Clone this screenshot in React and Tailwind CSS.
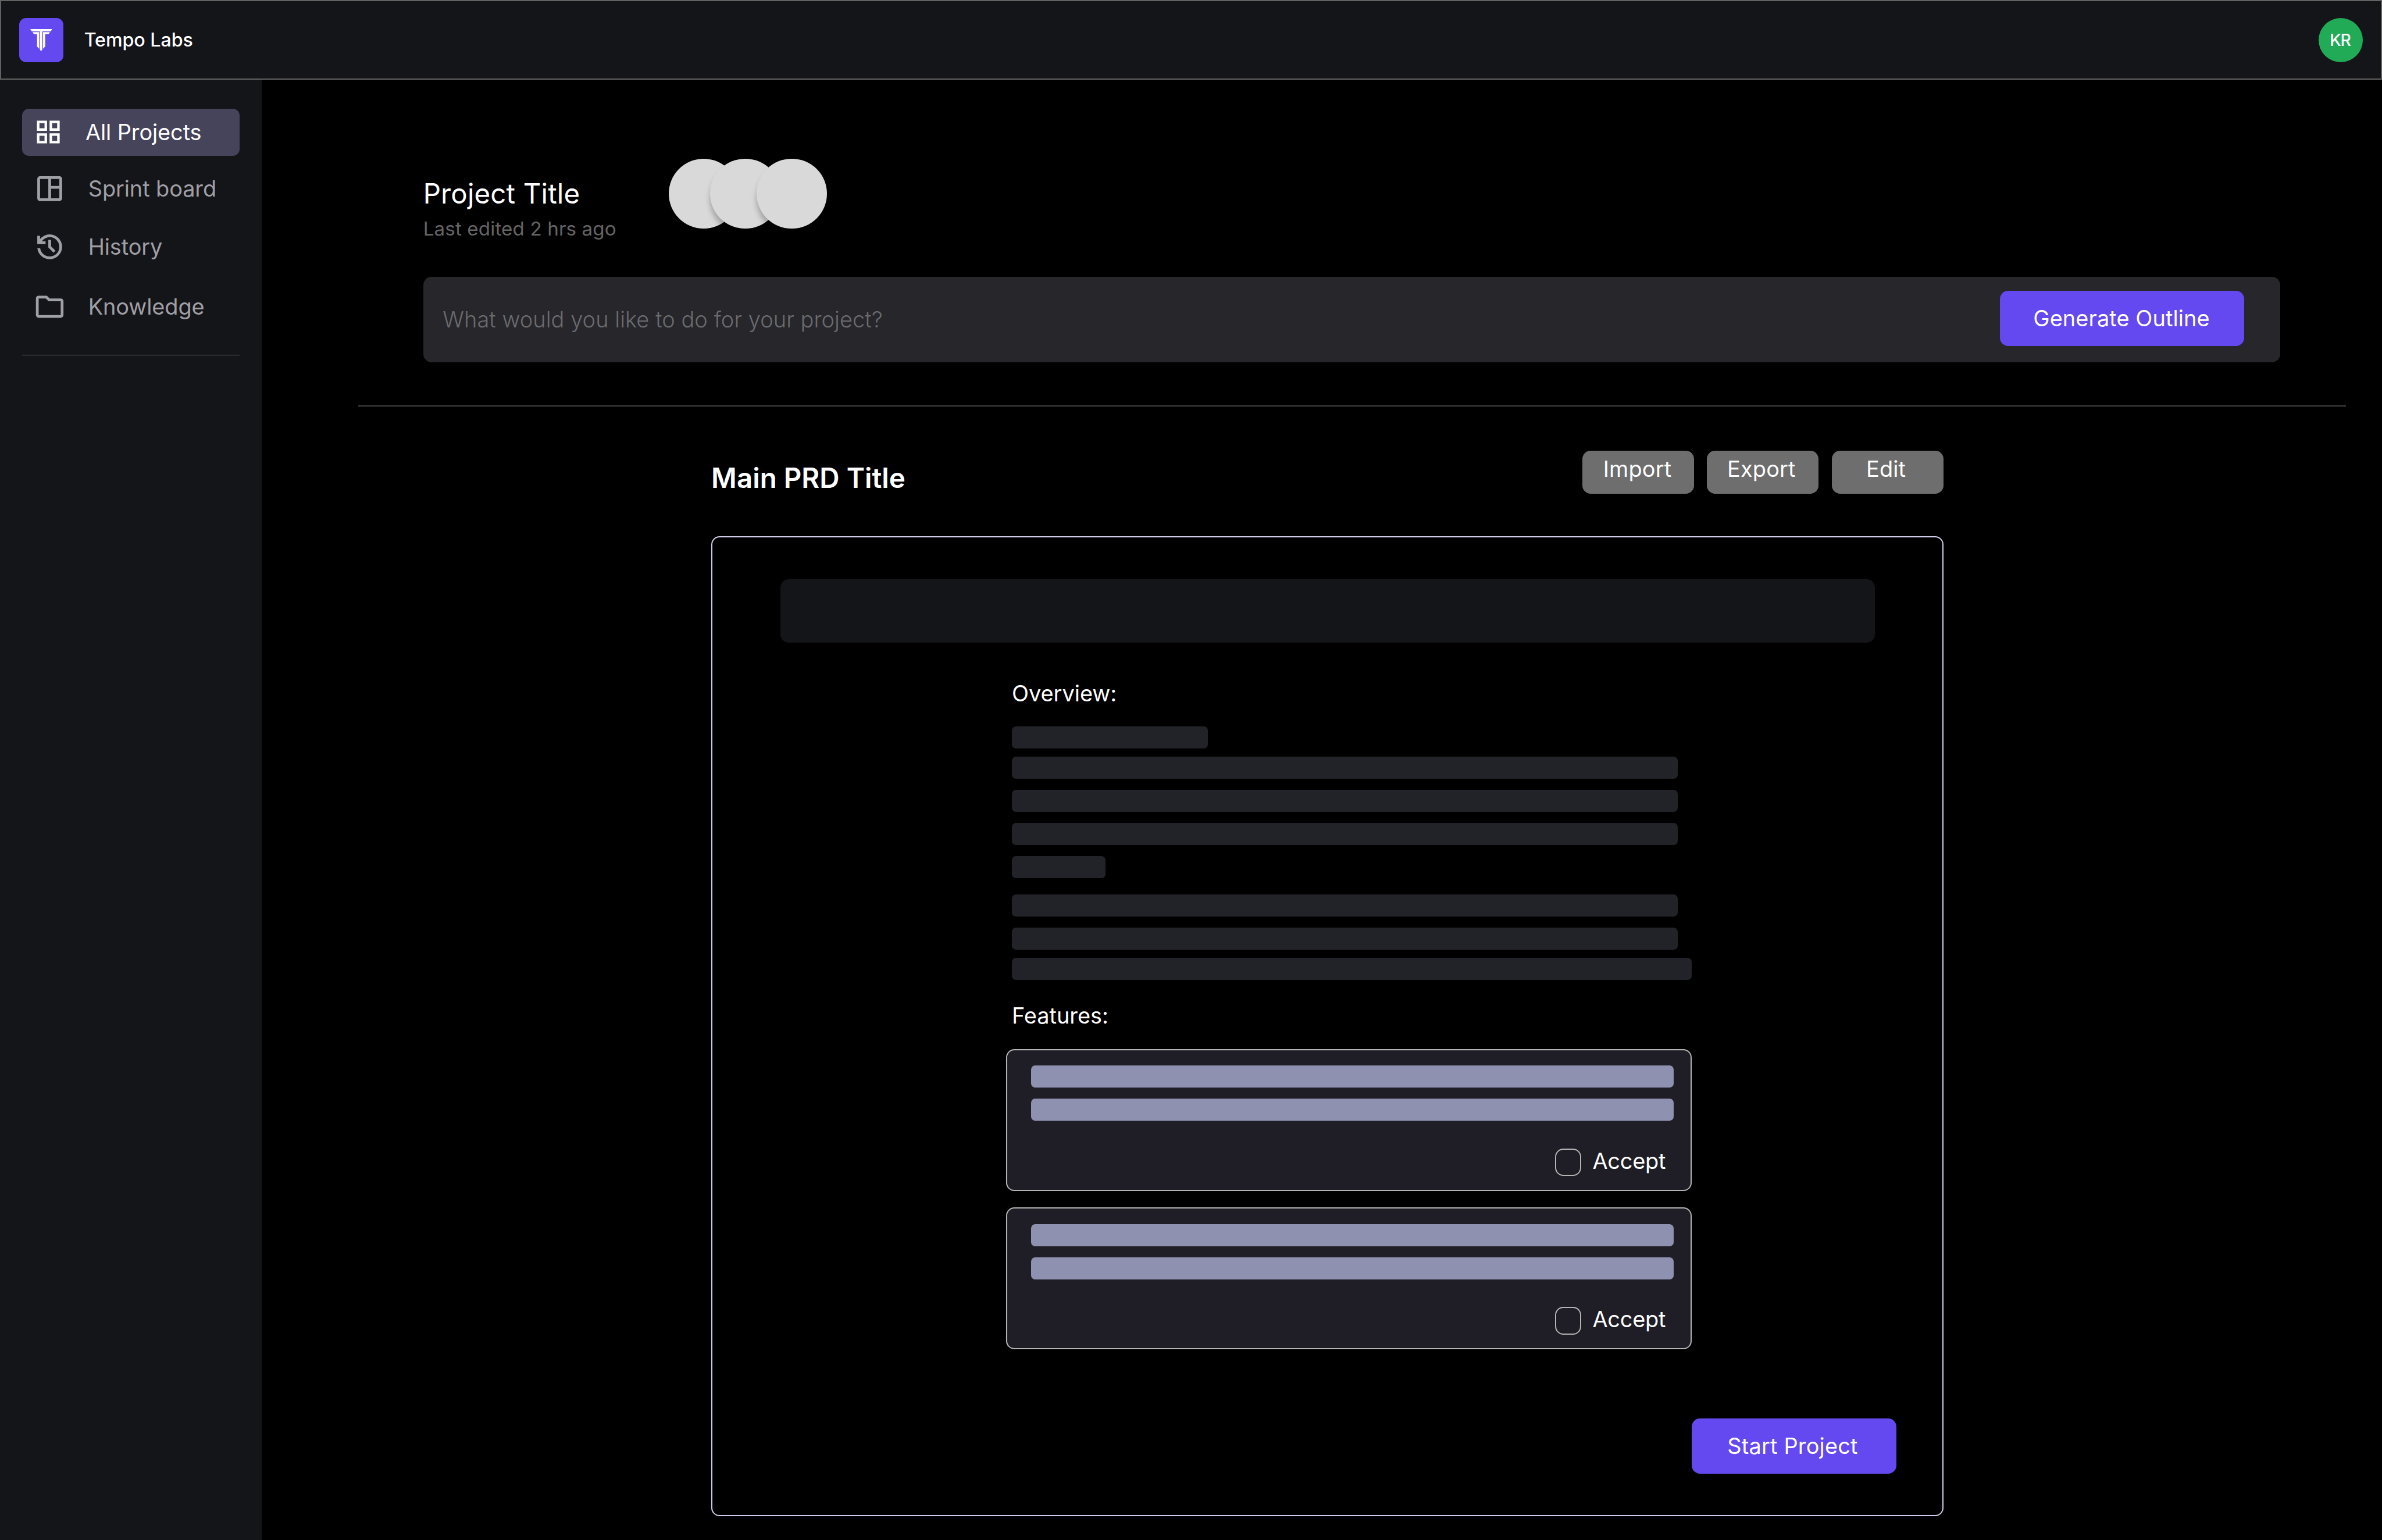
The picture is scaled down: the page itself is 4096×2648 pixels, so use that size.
// PRD outline screen: top bar + sidebar + project prompt + PRD draft.
// Laid out on the 1728x1117 desktop frame, then scaled up on the root.

import clsx from "clsx";

const NAV_ITEMS = [
  {
    label: "All Projects",
    active: true,
    icon: "M3 3v8h8V3H3zm6 6H5V5h4v4zm-6 4v8h8v-8H3zm6 6H5v-4h4v4zm4-16v8h8V3h-8zm6 6h-4V5h4v4zm-6 4v8h8v-8h-8zm6 6h-4v-4h4v4z",
    row: "h-[34px]",
  },
  {
    label: "Sprint board",
    icon: "M19 3H5c-1.1 0-2 .9-2 2v14c0 1.1.9 2 2 2h14c1.1 0 2-.9 2-2V5c0-1.1-.9-2-2-2zM5 19V5h6v14H5zm14 0h-6v-7h6v7zm0-9h-6V5h6v5z",
    row: "mt-3 h-6",
  },
  {
    label: "History",
    icon: "M12 21q-3.45 0-6.012-2.287T3.05 13H5.1q.35 2.6 2.313 4.3T12 19q2.925 0 4.963-2.037T19 12t-2.037-4.962T12 5q-1.725 0-3.225.8T6.25 8H9v2H3V4h2v2.35q1.275-1.6 3.113-2.475T12 3q1.875 0 3.513.713t2.85 1.924t1.925 2.85T21 12t-.712 3.513t-1.925 2.85t-2.85 1.925T12 21m2.8-4.8L11 12.4V7h2v4.6l3.2 3.2z",
    row: "mt-[18px] h-6",
  },
  {
    label: "Knowledge",
    icon: "M4 20q-.825 0-1.412-.587T2 18V6q0-.825.588-1.412T4 4h6l2 2h8q.825 0 1.413.588T22 8v10q0 .825-.587 1.413T20 20zm0-2h16V8h-8.825l-2-2H4z",
    row: "mt-[19.5px] h-6",
  },
];

const OVERVIEW_LINES = [
  "w-[142px]",
  "mt-1.5 w-[483px]",
  "mt-2 w-[483px]",
  "mt-2 w-[483px]",
  "mt-2 w-[68px]",
  "mt-3 w-[483px]",
  "mt-2 w-[483px]",
  "mt-1.5 w-[493px]",
];

function Logo() {
  return (
    <svg viewBox="0 0 128 128" className="h-8 w-8 rounded-[5px] bg-[#6449f0]" fill="#fff">
      <path d="M32 32H96L91.4 38.8H67.1V91.6L63.6 96L60.1 91.6V38.8H36.7Z" />
      <path d="M38.8 41H58V89L51.8 82.7V47H42.5Z" />
      <path d="M69.2 41H89.2L85.4 47H75.5V82.7L69.2 89Z" />
    </svg>
  );
}

function Topbar() {
  return (
    <header className="flex h-[58px] items-center border border-[#636363] bg-[#141519] px-[13.2px]">
      <Logo />
      <span className="ml-[15px] text-[13.6px] leading-4 font-medium tracking-[-0.03px] text-white">Tempo Labs</span>
      <span className="ml-auto flex h-8 w-8 items-center rounded-full bg-[#22ab57] pl-[8.2px] text-xs font-medium tracking-[-0.6px] text-white">
        KR
      </span>
    </header>
  );
}

function Sidebar() {
  return (
    <aside className="w-[190px] shrink-0 bg-[#141519] px-4 pt-[21px]">
      <nav className="flex flex-col">
        {NAV_ITEMS.map(({ label, icon, row, active }) => (
          <a
            key={label}
            className={clsx(
              "flex items-center rounded-[5px] pl-2",
              row,
              active ? "bg-[#45445b] text-white" : "text-[#a09fa5]"
            )}
          >
            <svg viewBox="0 0 24 24" fill="currentColor" className={active ? "h-[22px] w-[22px]" : "h-6 w-6"}>
              <path d={icon} />
            </svg>
            <span className="ml-4 text-base leading-6 tracking-[-0.04px]">{label}</span>
          </a>
        ))}
      </nav>
      <div className="mt-[23px] h-[0.5px] bg-[#737376]" />
    </aside>
  );
}

function ProjectHeader() {
  return (
    <div className="mt-[57px] ml-[117px] flex h-[86px] items-start">
      <div className="w-[178px] pt-[13.8px]">
        <h1 className="text-xl leading-6 tracking-[0.07px] text-white">Project Title</h1>
        <p className="mt-[3.2px] text-sm leading-5 tracking-[0.05px] text-[#646464]">Last edited 2 hrs ago</p>
      </div>
      <span className="h-[51px] w-[51px] rounded-full bg-[#d9d9d9] shadow-[0_4px_4px_rgba(0,0,0,0.25)]" />
      <span className="-ml-[21px] h-[51px] w-[51px] rounded-full bg-[#d9d9d9] shadow-[0_4px_4px_rgba(0,0,0,0.25)]" />
      <span className="-ml-[17px] h-[51px] w-[51px] rounded-full bg-[#d9d9d9] shadow-[0_4px_4px_rgba(0,0,0,0.25)]" />
    </div>
  );
}

function PromptBar() {
  return (
    <div className="mr-[74px] ml-[117px] flex h-[62px] items-center rounded-md bg-[#26262b] pr-[26px] pl-[14.2px]">
      <span className="text-base leading-6 font-light tracking-[0.03px] text-[#6b6b6e]">
        What would you like to do for your project?
      </span>
      <button type="button" className="mt-2.5 ml-auto flex h-10 w-[177px] items-center self-start rounded-md bg-[#6449f0] pl-6 text-base leading-6 tracking-[0.04px] text-white">
        Generate Outline
      </button>
    </div>
  );
}

function ToolButton({ children, className }) {
  return (
    <button
      type="button"
      className={clsx(
        "flex h-[31px] w-[81px] items-start rounded-md bg-[#6e6e6e] pt-[1.3px] text-base leading-6 tracking-[0.06px] text-white",
        className
      )}
    >
      {children}
    </button>
  );
}

function FeatureCard() {
  return (
    <div className="h-[103px] w-[497px] rounded-md border border-[#b4b4b4] bg-[#1f1e26] pt-[11.2px] pl-[17.2px]">
      <div className="h-4 w-[466px] rounded-[3px] bg-[#8e91b0]" />
      <div className="mt-2 h-4 w-[466px] rounded-[3px] bg-[#8e91b0]" />
      <label className="mt-5 ml-[380px] flex h-5 items-center">
        <span className="h-5 w-[19px] rounded-md border border-[#b4b4b4]" />
        <span className="mb-[1.8px] ml-[8.2px] text-base leading-6 tracking-[-0.1px] text-white">Accept</span>
      </label>
    </div>
  );
}

function PrdDraft() {
  return (
    <section className="ml-[326px] w-[894px]">
      <div className="mt-8 flex h-[62px] items-start">
        <h2 className="mt-[5.8px] mr-auto text-xl leading-7 font-semibold tracking-[0.03px] text-white">
          Main PRD Title
        </h2>
        <ToolButton className="pl-[15px]">Import</ToolButton>
        <ToolButton className="ml-[9px] pl-[15px]">Export</ToolButton>
        <ToolButton className="ml-2.5 pl-[24.8px]">Edit</ToolButton>
      </div>
      <div className="h-[711px] rounded-md border border-[#d0cde8] pt-[30.2px]">
        <div className="ml-[49.2px] h-[46px] w-[794px] rounded-md bg-[#141519]" />
        <div className="ml-[213.2px] w-[497px]">
          <h3 className="h-[61px] pt-[25.2px] pl-1 text-base leading-6 text-white">Overview:</h3>
          <div className="pl-1">
            {OVERVIEW_LINES.map((line, i) => (
              <div key={i} className={clsx("h-4 rounded-[3px] bg-[#222328]", line)} />
            ))}
          </div>
          <h3 className="h-[50px] pt-[13.9px] pl-1 text-base leading-6 text-white">Features:</h3>
          <div className="flex flex-col gap-3">
            <FeatureCard />
            <FeatureCard />
          </div>
        </div>
        <button type="button" className="mt-[50px] ml-[710.2px] flex h-10 w-[148.5px] items-center rounded-md bg-[#6449f0] pl-[26px] text-base leading-6 tracking-[0.08px] text-white">
          Start Project
        </button>
      </div>
    </section>
  );
}

export default function App() {
  return (
    <div className="h-screen overflow-hidden bg-black">
      <div className="flex h-[1117.2px] w-[1728px] flex-col font-['Inter',sans-serif] [zoom:2.37037]">
        <Topbar />
        <div className="flex min-h-0 flex-1">
          <Sidebar />
          <main className="flow-root flex-1 bg-black">
            <ProjectHeader />
            <PromptBar />
            <div className="mt-[31px] ml-[70px] h-px w-[1442px] bg-[#414141]" />
            <PrdDraft />
          </main>
        </div>
      </div>
    </div>
  );
}
